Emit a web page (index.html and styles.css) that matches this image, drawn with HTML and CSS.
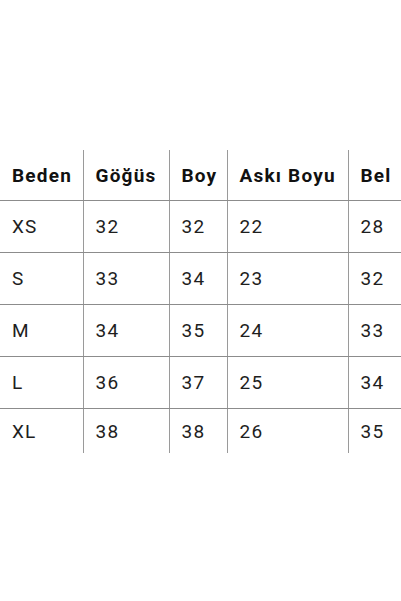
FILE: index.html
```html
<!DOCTYPE html>
<html lang="tr">
<head>
<meta charset="utf-8">
<link rel="stylesheet" href="styles.css">
</head>
<body>
<div class="page">
  <table class="size-table">
    <colgroup>
      <col class="c1"><col class="c2"><col class="c3"><col class="c4"><col class="c5">
    </colgroup>
    <thead>
      <tr class="head"><th>Beden</th><th>Göğüs</th><th>Boy</th><th>Askı Boyu</th><th>Bel</th></tr>
    </thead>
    <tbody>
      <tr><td>XS</td><td>32</td><td>32</td><td>22</td><td>28</td></tr>
      <tr><td>S</td><td>33</td><td>34</td><td>23</td><td>32</td></tr>
      <tr><td>M</td><td>34</td><td>35</td><td>24</td><td>33</td></tr>
      <tr><td>L</td><td>36</td><td>37</td><td>25</td><td>34</td></tr>
      <tr class="last"><td>XL</td><td>38</td><td>38</td><td>26</td><td>35</td></tr>
    </tbody>
  </table>
</div>
</body>
</html>
```
FILE: styles.css
```css
html, body {
  margin: 0;
  padding: 0;
  background: #ffffff;
}
.page {
  width: 401px;
  height: 601px;
  padding-top: 150px;
  box-sizing: border-box;
  font-family: Roboto, "Liberation Sans", sans-serif;
}
.size-table {
  width: 401px;
  table-layout: fixed;
  border-collapse: collapse;
}
.c1 { width: 83px; }
.c2 { width: 86px; }
.c3 { width: 58px; }
.c4 { width: 121px; }
.c5 { width: 53px; }
.size-table th,
.size-table td {
  text-align: left;
  padding: 0 0 0 12px;
  border-right: 1px solid #9a9a9a;
  border-bottom: 1px solid #8c8c8c;
  white-space: nowrap;
  font-size: 19px;
  letter-spacing: 1.2px;
}
.size-table th:last-child,
.size-table td:last-child {
  border-right: none;
}
.size-table th {
  height: 50px;
  font-weight: 700;
  color: #111111;
}
.size-table td {
  height: 51px;
  font-weight: 400;
  color: #1e1e1e;
}
.size-table tr.last td {
  border-bottom: none;
  height: 44px;
}
```
